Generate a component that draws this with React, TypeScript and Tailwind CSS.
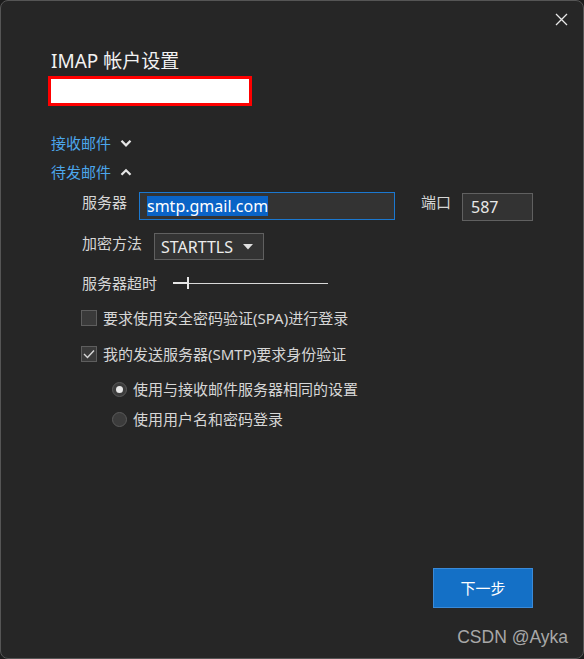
import React from 'react'

const font = { fontFamily: '"Noto Sans", "Noto Sans CJK SC", sans-serif' }

const Chevron = ({ up }: { up?: boolean }) => (
  <svg width="12" height="8" viewBox="0 0 12 8" className="ml-[9px]">
    <path
      d={up ? 'M1.5 6.8 L6 2.3 L10.5 6.8' : 'M1.5 1.8 L6 6.3 L10.5 1.8'}
      fill="none"
      stroke="#e6e6e6"
      strokeWidth="2.3"
    />
  </svg>
)

const Check = ({ checked, label }: { checked?: boolean; label: string }) => (
  <div className="flex items-center h-[20px] pl-[33px]">
    <div className="w-[16px] h-[16px] border border-[#5e5e5e] bg-[#3a3a3a] flex items-center justify-center">
      {checked && (
        <svg width="12" height="10" viewBox="0 0 12 10">
          <path d="M1 5 L4.5 8.5 L11 1.5" fill="none" stroke="#d8d8d8" strokeWidth="1.4" />
        </svg>
      )}
    </div>
    <span className="ml-[6px] text-[15px] text-[#d6d6d6] leading-[20px]">{label}</span>
  </div>
)

const Radio = ({ on, label }: { on?: boolean; label: string }) => (
  <div className="flex items-center h-[20px] pl-[64px]">
    <div className="w-[15px] h-[15px] rounded-full border border-[#5a5a5a] bg-[#3c3c3c] flex items-center justify-center">
      {on && <div className="w-[7px] h-[7px] rounded-full bg-[#e8e8e8]" />}
    </div>
    <span className="ml-[6px] text-[15px] text-[#d6d6d6] leading-[20px]">{label}</span>
  </div>
)

const App = () => {
  return (
    <div className="w-[584px] h-[659px] bg-[#1c1c1c]" style={font}>
      <div className="relative w-full h-full rounded-[8px] border border-[#555] bg-[#262626] flex flex-col">
        <div className="flex justify-end pt-[12px] pr-[15px]">
          <svg width="13" height="13" viewBox="0 0 13 13">
            <path d="M1 1 L12 12 M12 1 L1 12" stroke="#e8e8e8" strokeWidth="1.3" />
          </svg>
        </div>

        <div className="pl-[47px] flex flex-col">
          <h1 className="mt-[23px] pl-[3px] text-[19px] leading-[24px] text-[#f2f2f2]">IMAP 帐户设置</h1>
          <div className="mt-[3px] w-[204px] h-[30px] border-[3px] border-[#ff0000] bg-white" />

          <div className="mt-[27px] pl-[3px] flex items-center h-[20px]">
            <span className="text-[15px] text-[#4ca6ec]">接收邮件</span>
            <Chevron />
          </div>
          <div className="mt-[9px] pl-[3px] flex items-center h-[20px]">
            <span className="text-[15px] text-[#4ca6ec]">待发邮件</span>
            <Chevron up />
          </div>

          <div className="mt-[10px] flex items-start pl-[34px]">
            <span className="w-[57px] text-[15px] text-[#d6d6d6] leading-[20px]">服务器</span>
            <div className="w-[256px] h-[28px] border border-[#1b78d0] bg-[#333] flex items-center pl-[7px]">
              <span className="bg-[#0a63c6] text-[#ffffff] text-[16px] leading-[20px]">smtp.gmail.com</span>
            </div>
            <span className="ml-[26px] w-[41px] text-[15px] text-[#d6d6d6] leading-[20px]">端口</span>
            <div className="mt-[1px] w-[71px] h-[28px] border border-[#606060] bg-[#333] flex items-center pl-[8px]">
              <span className="text-[16px] text-[#e8e8e8]">587</span>
            </div>
          </div>

          <div className="mt-[12px] flex items-start pl-[34px]">
            <span className="w-[72px] text-[15px] text-[#d6d6d6] leading-[20px]">加密方法</span>
            <div className="w-[110px] h-[27px] border border-[#606060] bg-[#333] flex items-center pl-[6px] pr-[10px] justify-between">
              <span className="text-[16px] text-[#ececec]">STARTTLS</span>
              <svg width="10" height="6" viewBox="0 0 10 6">
                <path d="M0 0 L10 0 L5 5.5 Z" fill="#e0e0e0" />
              </svg>
            </div>
          </div>

          <div className="mt-[13px] flex items-center h-[20px] pl-[34px]">
            <span className="w-[91px] text-[15px] text-[#d6d6d6] leading-[20px]">服务器超时</span>
            <div className="relative w-[155px] h-[12px] flex items-center">
              <div className="w-[14px] h-[2px] bg-[#e6e6e6]" />
              <div className="w-[2px] h-[12px] bg-[#e6e6e6]" />
              <div className="flex-1 h-[1px] bg-[#d8d8d8]" />
            </div>
          </div>

          <div className="mt-[15px]">
            <Check label="要求使用安全密码验证(SPA)进行登录" />
          </div>
          <div className="mt-[16px]">
            <Check checked label="我的发送服务器(SMTP)要求身份验证" />
          </div>
          <div className="mt-[15px]">
            <Radio on label="使用与接收邮件服务器相同的设置" />
          </div>
          <div className="mt-[10px]">
            <Radio label="使用用户名和密码登录" />
          </div>
        </div>

        <div className="mt-auto mb-[50px] flex justify-end pr-[50px]">
          <button className="w-[100px] h-[40px] bg-[#1470c6] border border-[#3a8ad8] text-white text-[15px]">
            下一步
          </button>
        </div>

        <span
          className="absolute right-[15px] bottom-[8px] text-[17.5px] text-[#a8a8a8]"
          style={{ fontFamily: '"Liberation Sans", Arial, sans-serif' }}
        >
          CSDN @Ayka
        </span>
      </div>
    </div>
  )
}

export default App
